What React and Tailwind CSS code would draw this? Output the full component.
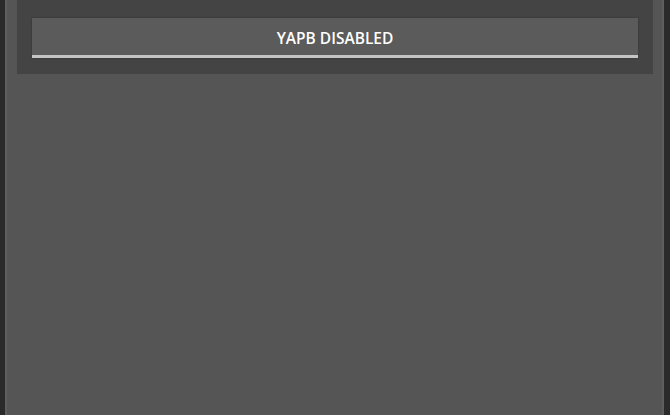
export default function App() {
  return (
    <div className="flex h-[415px] w-[670px] bg-[#2a2a2a] pl-[5px] pr-[6px]" style={{ fontFamily: '"Open Sans", "Liberation Sans", sans-serif' }}>
      <div className="flex-1 border-l-[2px] border-r-[2px] border-[#5e5e5e] bg-[#555555] pl-[10px] pr-[9px]">
        <div className="bg-[#444444] px-[15px] pb-[16px] pt-[18px]">
          <button className="flex h-[40px] w-full items-center justify-center border-b-[3px] border-[#c4c4c4] bg-[#5b5b5b] pt-[4px] text-[15.5px] font-semibold text-white shadow-[0_0_2px_rgba(0,0,0,0.3)]">
            YAPB DISABLED
          </button>
        </div>
      </div>
    </div>
  );
}
